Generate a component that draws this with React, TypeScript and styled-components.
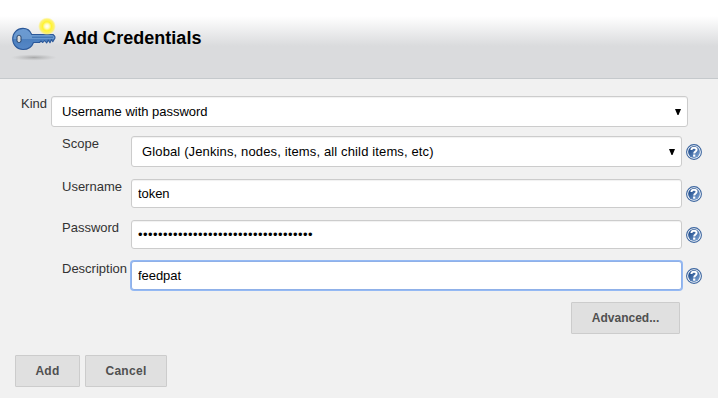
import React from "react";
import styled, { createGlobalStyle, css } from "styled-components";

const GlobalStyle = createGlobalStyle`
  * { box-sizing: border-box; }
  body { margin: 0; background: #fff; font-family: "Liberation Sans", Arial, sans-serif; font-size: 13px; }
`;

const Dialog = styled.div`
  width: 718px;
  height: 398px;
  background: #f1f1f1;
`;

const Header = styled.header`
  display: flex;
  height: 79px;
  padding: 14px 0 0 8px;
  border-bottom: 1px solid #c5c9cc;
  background: linear-gradient(#fff 16px, #dadbdd 46px);
`;

const Title = styled.h1`
  margin: 13px 0 0 7px;
  color: #000;
  font-size: 18px;
  line-height: 22px;
  font-weight: bold;
  letter-spacing: 0.03px;
  white-space: nowrap;
`;

const Form = styled.form`
  padding: 17px 0 0 21px;
`;

const Row = styled.div<{ $height: number; $indent?: boolean }>`
  display: flex;
  height: ${(p) => p.$height}px;
  margin-left: ${(p) => (p.$indent ? 41 : 0)}px;
`;

const Label = styled.label<{ $width: number }>`
  flex: none;
  width: ${(p) => p.$width}px;
  height: 16px;
  line-height: 16px;
  color: #333;
  white-space: nowrap;
`;

const SelectBox = styled.div<{ $width: number }>`
  display: flex;
  align-items: center;
  justify-content: space-between;
  width: ${(p) => p.$width}px;
  height: 31px;
  padding: 0 6px 0 10px;
  border: 1px solid #ccc;
  border-radius: 3px;
  background: #fff;
  box-shadow: inset 0 1px 1px rgba(0, 0, 0, 0.06);
  color: #000;
  white-space: nowrap;
`;

const SelectText = styled.span<{ $spacing: number }>`
  letter-spacing: ${(p) => p.$spacing}px;
`;

const Field = styled.input<{ $focused?: boolean }>`
  width: 551px;
  height: 29px;
  padding: 0 6px;
  border: 1px solid #ccc;
  border-radius: 3px;
  outline: none;
  background: #fff;
  box-shadow: inset 0 1px 1px rgba(0, 0, 0, 0.06);
  color: #000;
  font: 13px "Liberation Sans", Arial, sans-serif;
  letter-spacing: -0.05px;
  ${(p) =>
    p.type === "password" &&
    css`
      letter-spacing: 0.45px;
    `}
  ${(p) =>
    p.$focused &&
    css`
      border-color: #8fb0e8;
      box-shadow: 0 0 0 1px #94b9f4;
    `}
`;

const HelpLink = styled.span<{ $height: number }>`
  display: flex;
  align-items: center;
  width: 16px;
  height: ${(p) => p.$height}px;
  margin-left: 4px;
`;

const Actions = styled.div`
  display: flex;
  gap: 5px;
  margin: 21px 0 0 -6px;
`;

const AdvancedBar = styled.div`
  display: flex;
  justify-content: flex-end;
  padding-right: 38px;
`;

const Button = styled.button<{ $width: number; $spacing?: number }>`
  width: ${(p) => p.$width}px;
  height: 32px;
  padding: 0;
  border: 1px solid #ccc;
  border-radius: 1px;
  background: #e0e0e0;
  color: #505050;
  font: bold 12px/30px "Liberation Sans", Arial, sans-serif;
  letter-spacing: ${(p) => p.$spacing ?? 0.3}px;
`;

const Arrow = () => (
  <svg width="6" height="6" viewBox="0 0 6 6">
    <path d="M0 0H6L3.5 6H2.5Z" fill="#000" />
  </svg>
);

const Help = ({ height = 29 }: { height?: number }) => (
  <HelpLink $height={height}>
    <svg width="16" height="16" viewBox="0 0 16 16">
      <defs>
        <linearGradient id="helpFill" x1="0" y1="0" x2="1" y2="1">
          <stop offset="0.2" stopColor="#24508f" />
          <stop offset="1" stopColor="#86abd9" />
        </linearGradient>
      </defs>
      <circle cx="8" cy="8" r="7.4" fill="#fff" stroke="#3b659f" strokeWidth="1.1" />
      <circle cx="8" cy="8" r="5.9" fill="url(#helpFill)" />
      <path d="M5.4 6C5.5 4.4 6.5 3.7 8 3.7C9.7 3.7 10.6 4.5 10.6 5.8C10.6 7.6 8.2 7.5 8.2 9.6" fill="none" stroke="#fff" strokeWidth="2" />
      <rect x="7.1" y="10.5" width="2.2" height="2.2" fill="#fff" />
    </svg>
  </HelpLink>
);

const KeyIcon = () => (
  <svg width="48" height="48" viewBox="0 0 48 48">
    <defs>
      <linearGradient id="keyFill" x1="0" y1="0" x2="0" y2="1">
        <stop offset="0" stopColor="#6c9bd2" />
        <stop offset="0.48" stopColor="#6998ce" />
        <stop offset="0.5" stopColor="#4c7fbe" />
        <stop offset="1" stopColor="#5688c7" />
      </linearGradient>
      <radialGradient id="keyShadow">
        <stop offset="0" stopColor="#777" stopOpacity="0.5" />
        <stop offset="1" stopColor="#999" stopOpacity="0" />
      </radialGradient>
      <radialGradient id="glow">
        <stop offset="0" stopColor="#fff" />
        <stop offset="0.25" stopColor="#fffbc0" />
        <stop offset="0.5" stopColor="#fff331" />
        <stop offset="0.8" stopColor="#fff04a" stopOpacity="0.75" />
        <stop offset="1" stopColor="#fff27a" stopOpacity="0" />
      </radialGradient>
    </defs>
    <ellipse cx="26" cy="43.5" rx="23" ry="3.2" fill="url(#keyShadow)" />
    <path
      d="M15 14.4C19 14.4 22.2 16.8 23.7 20.5H45L46.8 22.3L47 24L44.8 27.7L43.5 25.5L42 28.8L40.3 26L38.7 29L36.5 26.5L34.8 28.5L33 27L31.5 28.5H25.5C24 32.7 20.3 35.5 15 35.5C9 35.5 4.7 30.8 4.7 25C4.7 19 9.2 14.4 15 14.4Z"
      fill="url(#keyFill)"
      stroke="#2b5899"
      strokeWidth="1.1"
      strokeLinejoin="round"
    />
    <path d="M24 23.2H45" stroke="#356aab" strokeWidth="1" />
    <rect x="9" y="21.3" width="4" height="7.2" rx="1.8" fill="#dadada" stroke="#28466f" />
    <circle cx="39" cy="12.3" r="9" fill="url(#glow)" />
  </svg>
);

export default function App() {
  return (
    <>
      <GlobalStyle />
      <Dialog>
        <Header>
          <KeyIcon />
          <Title>Add Credentials</Title>
        </Header>
        <Form>
          <Row $height={40}>
            <Label $width={30}>Kind</Label>
            <SelectBox $width={637}>
              <SelectText $spacing={-0.02}>Username with password</SelectText>
              <Arrow />
            </SelectBox>
          </Row>
          <Row $height={43} $indent>
            <Label $width={69}>Scope</Label>
            <SelectBox $width={551}>
              <SelectText $spacing={0.135}>Global (Jenkins, nodes, items, all child items, etc)</SelectText>
              <Arrow />
            </SelectBox>
            <Help height={31} />
          </Row>
          <Row $height={41} $indent>
            <Label $width={69}>Username</Label>
            <Field type="text" defaultValue="token" />
            <Help />
          </Row>
          <Row $height={41} $indent>
            <Label $width={69}>Password</Label>
            <Field type="password" defaultValue={"x".repeat(35)} />
            <Help />
          </Row>
          <Row $height={41} $indent>
            <Label $width={69}>Description</Label>
            <Field type="text" defaultValue="feedpat" $focused />
            <Help />
          </Row>
          <AdvancedBar>
            <Button type="button" $width={109} $spacing={0.02}>Advanced...</Button>
          </AdvancedBar>
          <Actions>
            <Button type="button" $width={65}>Add</Button>
            <Button type="button" $width={82}>Cancel</Button>
          </Actions>
        </Form>
      </Dialog>
    </>
  );
}
